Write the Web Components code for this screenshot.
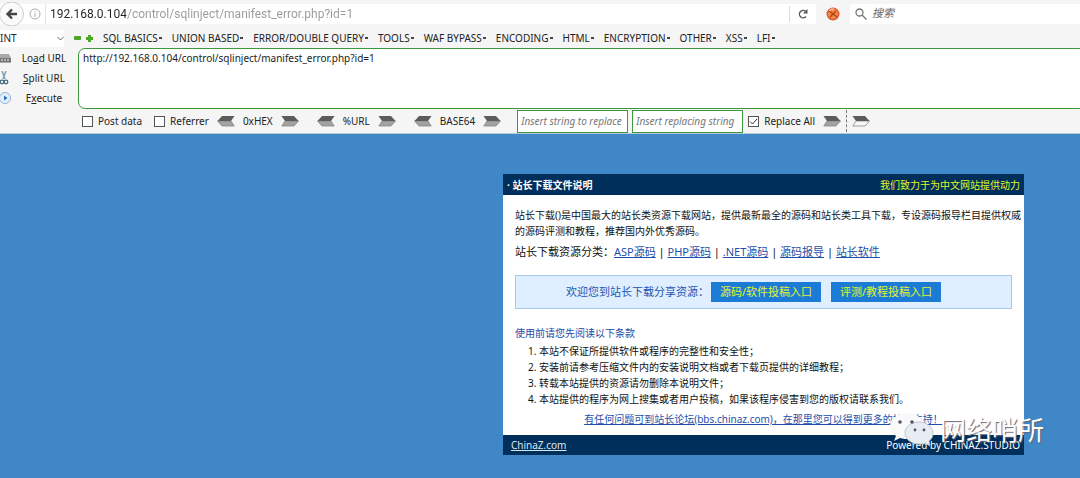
<!DOCTYPE html>
<html lang="zh-CN">
<head>
<meta charset="utf-8">
<title>站长下载文件说明</title>
<style>
html, body { margin: 0; min-height: 100%; }
body { background: #4087c7; color: #222; font: 10px/16px "Noto Sans", "Noto Sans CJK SC", sans-serif; }
</style>
</head>
<body>
<browser-header></browser-header>
<main><download-notice></download-notice></main>

<script>
const define = (name, html, setup) => {
  const tpl = document.createElement('template');
  tpl.innerHTML = html;
  customElements.define(name, class extends HTMLElement {
    constructor() {
      super();
      this.attachShadow({ mode: 'open' }).append(tpl.content.cloneNode(true));
      if (setup) setup(this, this.shadowRoot);
    }
  });
};

/* Ribbon-shaped arrow button; attributes: left, hollow */
define('ribbon-arrow', `
<style>
:host { display: block; width: 18px; height: 12px; }
button { display: block; border: 0; padding: 0; background: none; width: 18px; height: 12px; }
svg { display: block; }
:host([left]) svg { transform: scaleX(-1); }
:host([hollow]) .low { fill: #f8f8f8; }
</style>
<button type="button" aria-label="convert"><svg width="18" height="12" viewBox="0 0 18 12">
<path class="low" d="M4 6H17.500L13 11H.8z" fill="#a2a2a2" stroke="#888" stroke-width=".8"/><path d="M.5 1H13L17.500 6H4z" fill="#5c5c5c"/></svg></button>`);

define('menu-button', `
<style>
:host { display: block; }
button { display: flex; align-items: center; gap: 1px; border: 0; padding: 0; background: none; color: inherit; font: inherit; white-space: nowrap; }
i { width: 3px; height: 2px; background: #444; }
</style>
<button type="button"><slot></slot><i></i></button>`);

define('check-option', `
<style>
:host { display: block; }
label { display: flex; align-items: center; gap: 5px; white-space: nowrap; }
input { appearance: none; margin: 0; box-sizing: border-box; width: 11px; height: 11px; border: 1px solid #555; background: #fff; }
input:checked { background: #fff url("data:image/svg+xml,%3Csvg xmlns='http://www.w3.org/2000/svg' viewBox='0 0 9 9'%3E%3Cpath d='M1 4.5l2.5 2.5L8 2' fill='none' stroke='%23333'/%3E%3C/svg%3E"); }
</style>
<label><input type="checkbox"><slot></slot></label>`, (host, root) => {
  root.querySelector('input').checked = host.hasAttribute('checked');
});

define('convert-pair', `
<style>
:host { display: flex; align-items: center; gap: 8px; }
</style>
<ribbon-arrow left></ribbon-arrow><slot></slot><ribbon-arrow></ribbon-arrow>`);

define('address-bar', `
<style>
:host { display: flex; height: 20px; padding: 4px 0; align-items: stretch; background: #f5f5f5; }
button { border: 0; padding: 0; background: none; }
svg { display: block; }
.field { flex: 1; display: flex; align-items: center; background: #fff; }
.back { margin: -2px 0; }
.info { margin: 0 3px 0 4px; }
input { border: 0; padding: 0; margin: 0; outline: 0; background: none; min-width: 0; flex: 1; font: 12px/20px Roboto, "Noto Sans CJK SC", sans-serif; }
.url { flex: 1; border-left: 1px solid #e4e4e4; padding-left: 4px; }
.url input { width: 100%; height: 20px; display: block; color: #999; -webkit-text-fill-color: transparent; background: linear-gradient(to right, #222 76px, #999 76px); -webkit-background-clip: text; background-clip: text; }
.reload { border-left: 1px solid #ddd; height: 16px; width: 27px; display: grid; place-items: center; }
.addon { width: 34px; display: grid; place-items: center; }
.search { flex: 0 0 230px; gap: 5px; padding-left: 5px; box-sizing: border-box; }
.search input { font-size: 11px; }
.search input::placeholder { color: #666; font-style: italic; opacity: 1; }
</style>
<div class="field">
<button class="back" aria-label="Back"><svg width="24" height="24" viewBox="0 0 24 24"><circle cx="11.500" cy="12" r="12" fill="#fafafa" stroke="#ccc"/><path d="M17 12H8M12 7.500L7.500 12l4.500 4.500" fill="none" stroke="#444" stroke-width="2.400"/></svg></button>
<svg class="info" width="14" height="14" viewBox="0 0 14 14" fill="none" stroke="#aaa"><circle cx="7" cy="7" r="5"/><path d="M7 6v4M7 4v1"/></svg>
<div class="url"><input type="text" aria-label="Address" value="192.168.0.104/control/sqlinject/manifest_error.php?id=1"></div>
<button class="reload" aria-label="Reload"><svg width="12" height="12" viewBox="0 0 12 12"><path d="M9 8.500A3.700 3.700 0 1 1 8.500 3.200" fill="none" stroke="#555" stroke-width="1.400"/><path d="M10.500 1v4.500H6z" fill="#555"/></svg></button>
</div>
<button class="addon" aria-label="Add-on"><svg width="14" height="14" viewBox="0 0 14 14"><circle cx="7" cy="7" r="6.500" fill="#dd5a2c"/><circle cx="7" cy="7" r="5" fill="#f08a4a"/><path d="M3 4l8 6M4 10l6-6" stroke="#b03a14" stroke-width="1.200"/><path d="M3 4q2-3 5-2" stroke="#ffe0c8" fill="none"/></svg></button>
<div class="field search"><svg width="12" height="12" viewBox="0 0 12 12" fill="none" stroke="#777" stroke-width="1.300"><circle cx="4.500" cy="4.500" r="3.500"/><path d="M7 7l4.500 4.500"/></svg><input type="text" aria-label="Search" placeholder="搜索"></div>`);

define('hack-bar', `
<style>
:host { display: block; font-size: 10px; color: #222; }
.menus { display: flex; align-items: center; height: 20px; gap: 10px; }
select { appearance: none; border: 0; padding: 0; width: 64px; height: 17px; font: inherit; color: inherit; background: #fff url("data:image/svg+xml,%3Csvg xmlns='http://www.w3.org/2000/svg' width='7' height='5' viewBox='0 0 7 5'%3E%3Cpath d='M.5 1l3 3 3-3' fill='none' stroke='%23666'/%3E%3C/svg%3E") no-repeat 57px 6px; }
.marks { display: flex; gap: 5px; align-items: center; }
.marks svg { display: block; }
.edit { display: flex; gap: 11px; overflow: hidden; }
.actions { width: 67px; display: flex; flex-direction: column; }
.actions button { display: flex; align-items: center; gap: 9px; height: 20px; border: 0; padding: 0; background: none; font: inherit; color: inherit; white-space: nowrap; }
.actions svg { flex: none; }
.actions span { flex: 1; text-align: center; }
textarea { flex: 1; box-sizing: border-box; height: 61px; margin: 0 -6px 0 0; resize: none; outline: 0; border: 1px solid #3a9a3a; border-radius: 7px; padding: 1px 4px; font: 10px/16px "Noto Sans", sans-serif; color: #222; background: #fff; }
.tools { display: flex; align-items: center; height: 24px; padding-left: 82px; }
.checks { display: flex; gap: 12px; }
.pairs { display: flex; gap: 18px; margin: 0 16px 0 8px; }
.swap { display: flex; gap: 4px; margin-right: 5px; }
.swap input { box-sizing: border-box; width: 111px; height: 23px; border: 1px solid #3a9a3a; padding: 0 3px; font: italic 10px/16px "Noto Sans", sans-serif; background: #fff; outline: 0; }
.swap input::placeholder { color: #777; opacity: 1; }
.ends { display: flex; align-items: center; gap: 5px; margin-left: 8px; }
.ends i { height: 22px; border-left: 1px dashed #777; }
</style>
<div class="menus">
<select aria-label="Type"><option>INT</option></select>
<div class="marks"><svg width="7" height="6"><rect y="1" width="7" height="4" rx="1" fill="#4ca824"/></svg><svg width="7" height="7"><path d="M2 0h3v2h2v3H5v2H2V5H0V2h2z" fill="#4ca824"/></svg></div>
<menu-button>SQL BASICS</menu-button><menu-button>UNION BASED</menu-button><menu-button>ERROR/DOUBLE QUERY</menu-button><menu-button>TOOLS</menu-button><menu-button>WAF BYPASS</menu-button><menu-button>ENCODING</menu-button><menu-button>HTML</menu-button><menu-button>ENCRYPTION</menu-button><menu-button>OTHER</menu-button><menu-button>XSS</menu-button><menu-button>LFI</menu-button>
</div>
<div class="edit">
<div class="actions">
<button type="button"><svg width="12" height="14" viewBox="0 0 12 14"><path d="M0 3h9l2 4v5H0z" fill="#aaa"/><path d="M0 7h11v4H0z" fill="#777"/><path d="M1 9h2M4 9h2M7 9h2" stroke="#eee"/></svg><span>Lo<u>a</u>d URL</span></button>
<button type="button"><svg width="12" height="14" viewBox="0 0 12 14" fill="none"><path d="M2 0l3 8M6 0L3 8" stroke="#7fa3b5" stroke-width="1.500"/><circle cx="2" cy="11" r="1.800" stroke="#456a80" stroke-width="1.300"/><circle cx="6" cy="11" r="1.800" stroke="#456a80" stroke-width="1.300"/></svg><span><u>S</u>plit URL</span></button>
<button type="button"><svg width="12" height="14" viewBox="0 0 12 14"><circle cx="5" cy="7" r="5.500" fill="#e4effb" stroke="#8fb5de"/><path d="M4 4.500L7.500 7 4 9.500z" fill="#2b6cb8"/></svg><span>E<u>x</u>ecute</span></button>
</div>
<textarea aria-label="URL">http://192.168.0.104/control/sqlinject/manifest_error.php?id=1</textarea>
</div>
<div class="tools">
<div class="checks"><check-option>Post data</check-option><check-option>Referrer</check-option></div>
<div class="pairs"><convert-pair>0xHEX</convert-pair><convert-pair>%URL</convert-pair><convert-pair>BASE64</convert-pair></div>
<div class="swap"><input type="text" aria-label="Find" placeholder="Insert string to replace"><input type="text" aria-label="Replace" placeholder="Insert replacing string"></div>
<check-option checked>Replace All</check-option>
<div class="ends"><ribbon-arrow></ribbon-arrow><i></i><ribbon-arrow hollow></ribbon-arrow></div>
</div>`);

define('browser-header', `
<style>:host { display: block; background: #f5f5f5; border-bottom: 1px solid #b9c8d6; }</style>
<address-bar></address-bar><hack-bar></hack-bar>`);

define('chat-watermark', `
<style>
:host { display: flex; align-items: center; gap: 4px; color: #fff; font: 26px/32px "Noto Sans CJK SC", sans-serif; white-space: nowrap; text-shadow: 1px 1px 1px #667; }
</style>
<svg width="48" height="36" viewBox="0 0 48 36" fill="#f9f9fa" stroke="#b5bcc6" stroke-width=".8"><path d="M19 2C9 2 2 8 2 15c0 4 2 7 6 10l-2 5 6-3c3 1 6 1 9 1 8-1 15-6 15-13S29 2 19 2z" stroke="none"/><path d="M31 11c-8 0-14 5-14 11s6 11 14 11c2 0 4 0 6-1l5 3-1-5c3-2 4-5 4-8 0-6-6-11-14-11z" fill="#e8edf4"/><g fill="#556" stroke="none"><circle cx="12" cy="11" r="1.800"/><circle cx="24" cy="11" r="1.800"/><circle cx="27" cy="19" r="1.400"/><circle cx="36" cy="19" r="1.400"/></g></svg><span>网络哨所</span>`);

define('download-notice', `
<style>
:host { display: block; position: relative; box-sizing: border-box; max-width: 521px; margin: 40px 56px 23px auto; background: #fff; color: #111; }
header, footer { display: flex; justify-content: space-between; align-items: center; background: #002f5c; color: #fff; height: 20px; padding: 0 4px; }
header { height: 21px; }
h1 { margin: 0; font: bold 10px/16px "Noto Sans", "Noto Sans CJK SC", sans-serif; }
header span { color: #e3f52a; }
a { color: #1e50a8; }
footer a { color: #dce6f0; margin-left: 4px; }
.body { padding: 12px 0 8px 12px; }
p { margin: 0; }
.cats { font-size: 11px; line-height: 20px; margin-top: 3px; }
.share { display: flex; align-items: center; justify-content: center; gap: 10px; box-sizing: border-box; height: 34px; margin: 13px 12px 16px 0; padding-right: 20px; border: 1px solid #a5cbea; background: #dfefff; color: #2554b0; font-size: 11px; }
.share span { margin-right: -8px; }
.share a { background: #1c7cd5; color: #e3f52a; text-decoration: none; line-height: 20px; padding: 0 9px; }
h2 { margin: 0 0 2px; font: 10px/16px "Noto Sans", "Noto Sans CJK SC", sans-serif; color: #1e46a8; }
ol { margin: 0; padding-left: 24px; }
.forum { text-align: center; margin: 4px 12px 0 0; }
chat-watermark { position: absolute; right: -20px; bottom: 8px; }
</style>
<header><h1>· 站长下载文件说明</h1><span>我们致力于为中文网站提供动力</span></header>
<div class="body">
<p>站长下载()是中国最大的站长类资源下载网站，提供最新最全的源码和站长类工具下载，专设源码报导栏目提供权威的源码评测和教程，推荐国内外优秀源码。</p>
<p class="cats">站长下载资源分类：<a href="#">ASP源码</a> | <a href="#">PHP源码</a> | <a href="#">.NET源码</a> | <a href="#">源码报导</a> | <a href="#">站长软件</a></p>
<div class="share"><span>欢迎您到站长下载分享资源：</span><a href="#">源码/软件投稿入口</a><a href="#">评测/教程投稿入口</a></div>
<h2>使用前请您先阅读以下条款</h2>
<ol><li>本站不保证所提供软件或程序的完整性和安全性；</li><li>安装前请参考压缩文件内的安装说明文档或者下载页提供的详细教程；</li><li>转载本站提供的资源请勿删除本说明文件；</li><li>本站提供的程序为网上搜集或者用户投稿，如果该程序侵害到您的版权请联系我们。</li></ol>
<p class="forum"><a href="#">有任何问题可到站长论坛(bbs.chinaz.com)，在那里您可以得到更多的技术支持！</a></p>
</div>
<footer><a href="#">ChinaZ.com</a><span>Powered by CHINAZ.STUDIO</span></footer>
<chat-watermark></chat-watermark>`);
</script>
</body>
</html>
